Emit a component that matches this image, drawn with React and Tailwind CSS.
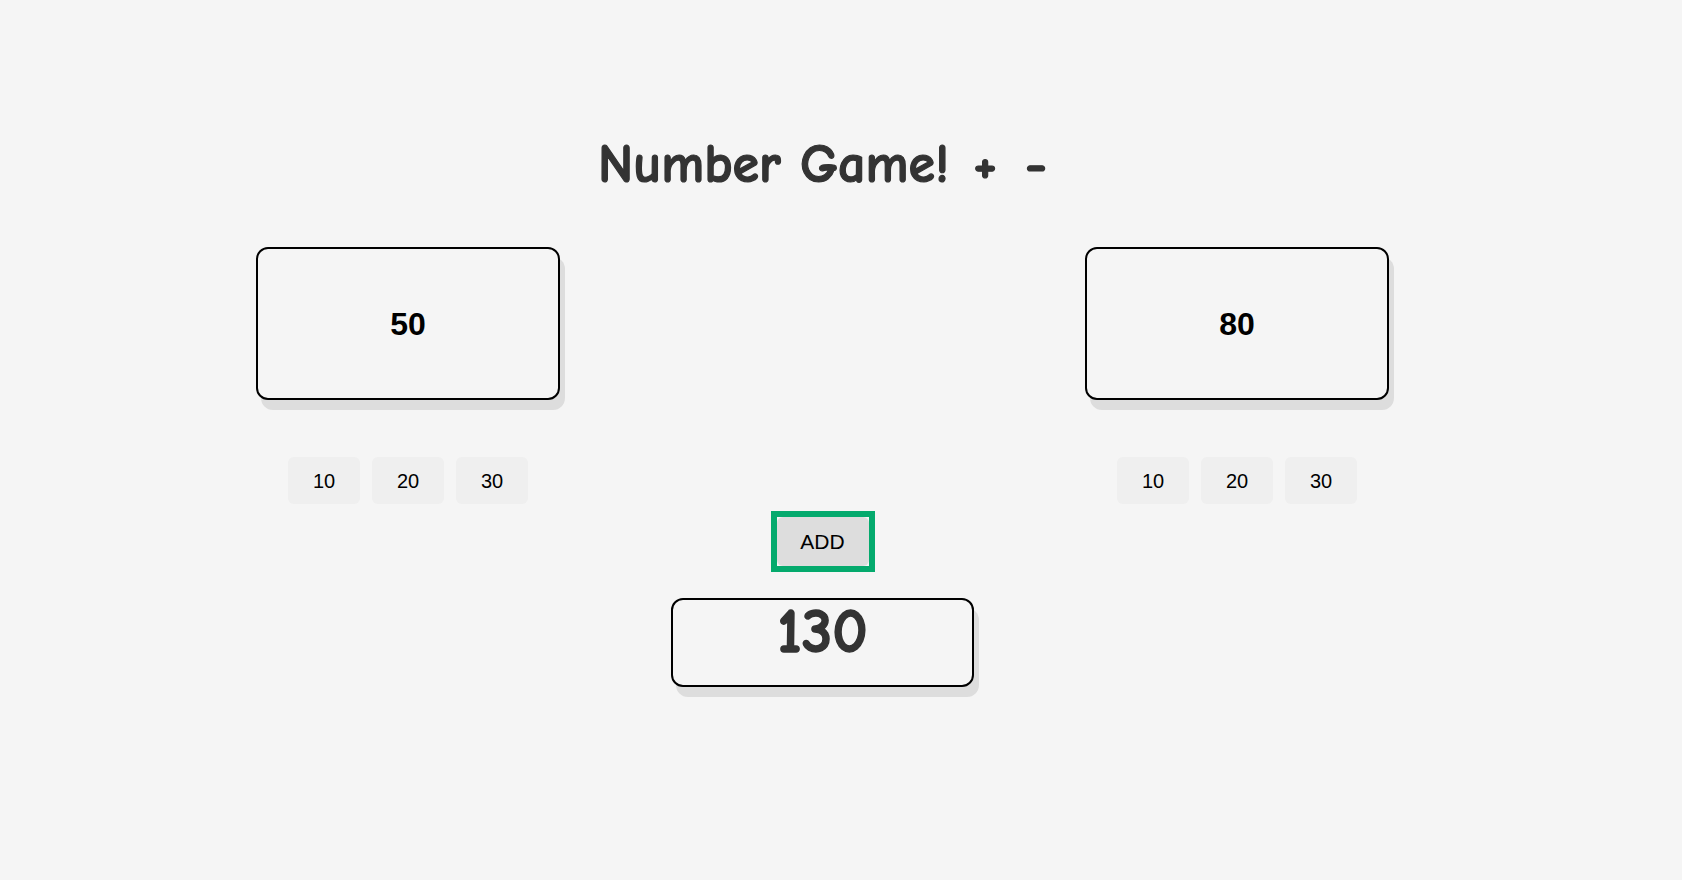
import { useState } from "react";

const steps = [10, 20, 30];

function NumberCard({ value, onPick }) {
  return (
    <div className="flex w-[304px] flex-col items-center">
      <div className="flex h-[153px] w-[304px] items-center justify-center rounded-xl border-2 border-black bg-[#f5f5f5] shadow-[5px_10px_0_#dddddd]">
        <span className="text-[32px] font-bold text-black" style={{ fontFamily: "'Liberation Sans', Arial, sans-serif" }}>
          {value}
        </span>
      </div>
      <div className="mt-[57px] flex gap-3">
        {steps.map((n) => (
          <button
            key={n}
            type="button"
            onClick={() => onPick(n)}
            className="h-[47px] w-[72px] rounded-md bg-[#efefef] text-[20px] text-black"
            style={{ fontFamily: "'Liberation Sans', Arial, sans-serif" }}
          >
            {n}
          </button>
        ))}
      </div>
    </div>
  );
}

export default function App() {
  const [left, setLeft] = useState(50);
  const [right, setRight] = useState(80);
  const [result, setResult] = useState(130);

  const comic = { fontFamily: "'Comic Sans MS', 'Comic Neue', Lato, 'DejaVu Sans', sans-serif" };

  return (
    <div className="min-h-screen w-full bg-[#f5f5f5]">
      <div className="flex w-[1645px] flex-col items-center pt-[130px]">
        <h1
          className="text-[54px] font-bold leading-[70px] text-[#333333] [-webkit-text-stroke:1.2px_#333333]"
          style={comic}
        >
          Number Game!
          <span className="ml-[24px]">+</span>
          <span className="ml-[28px]">-</span>
        </h1>

        <div className="mt-[47px] flex w-[1133px] justify-between">
          <NumberCard value={left} onPick={setLeft} />
          <NumberCard value={right} onPick={setRight} />
        </div>

        <div className="mt-[7px] border-[6px] border-[#04AA6D]">
          <button
            type="button"
            onClick={() => setResult(left + right)}
            className="h-[49px] w-[92px] rounded-md bg-[#dddddd] text-[21px] text-black"
            style={{ fontFamily: "'Liberation Sans', Arial, sans-serif" }}
          >
            ADD
          </button>
        </div>

        <div className="mt-[26px] flex h-[89px] w-[303px] justify-center rounded-xl border-2 border-black bg-[#f5f5f5] shadow-[5px_10px_0_#dddddd]">
          <span
            className="text-[62px] font-bold leading-[64px] text-[#333333] [-webkit-text-stroke:1.5px_#333333]"
            style={comic}
          >
            {result}
          </span>
        </div>
      </div>
    </div>
  );
}
